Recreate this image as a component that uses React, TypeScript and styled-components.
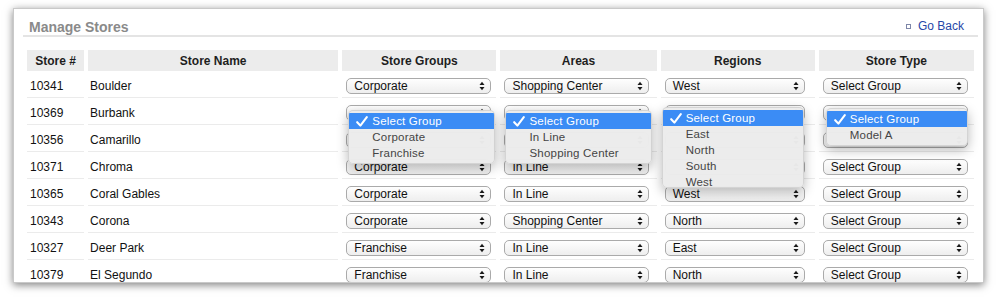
import styled, { createGlobalStyle } from 'styled-components';

const GlobalStyle = createGlobalStyle`
  body {
    margin: 0;
    background: #fff;
    font-family: "Liberation Sans", Arial, sans-serif;
  }
`;

type Menu = { options: string[]; left: number; top: number; width: number; maxH?: number };

type Row = {
  id: string;
  name: string;
  group: string;
  area: string;
  region: string;
  type: string;
};

// values that sit under the open menus are not readable in the shot, so they stay blank
const rows: Row[] = [
  { id: '10341', name: 'Boulder', group: 'Corporate', area: 'Shopping Center', region: 'West', type: 'Select Group' },
  { id: '10369', name: 'Burbank', group: '', area: '', region: '', type: '' },
  { id: '10356', name: 'Camarillo', group: '', area: '', region: '', type: '' },
  { id: '10371', name: 'Chroma', group: 'Corporate', area: 'In Line', region: '', type: 'Select Group' },
  { id: '10365', name: 'Coral Gables', group: 'Corporate', area: 'In Line', region: 'West', type: 'Select Group' },
  { id: '10343', name: 'Corona', group: 'Corporate', area: 'Shopping Center', region: 'North', type: 'Select Group' },
  { id: '10327', name: 'Deer Park', group: 'Franchise', area: 'In Line', region: 'East', type: 'Select Group' },
  { id: '10379', name: 'El Segundo', group: 'Franchise', area: 'In Line', region: 'North', type: 'Select Group' },
];

// the four pop-up menus that are open on the Burbank row
const openMenus: Menu[] = [
  { options: ['Select Group', 'Corporate', 'Franchise'], left: 6, top: 10, width: 147 },
  { options: ['Select Group', 'In Line', 'Shopping Center'], left: 5, top: 10, width: 147 },
  { options: ['Select Group', 'East', 'North', 'South', 'West'], left: 1, top: 7, width: 142, maxH: 81 },
  { options: ['Select Group', 'Model A'], left: 7, top: 8, width: 142 },
];

function Arrows() {
  return (
    <svg width="6" height="10" viewBox="0 0 6 10">
      <path d="M0.5 4 L3 0.8 L5.5 4 Z" fill="#1a1a1a" />
      <path d="M0.5 6 L3 9.2 L5.5 6 Z" fill="#1a1a1a" />
    </svg>
  );
}

function CheckMark() {
  return (
    <svg width="12" height="11" viewBox="0 0 12 11">
      <path d="M1.2 6.2 L4.4 9.6 L10.8 1.2" fill="none" stroke="#fff" strokeWidth="2.1" strokeLinecap="round" strokeLinejoin="round" />
    </svg>
  );
}

function Select({ value, width, menu }: { value: string; width: number; menu?: Menu }) {
  return (
    <SelectCell>
      <SelectBox $w={width}>
        <span>{value}</span>
        <Arrows />
      </SelectBox>
      {menu && (
        <PopMenu $left={menu.left} $top={menu.top} $w={menu.width} $maxH={menu.maxH}>
          {menu.options.map((o, i) => (
            <MenuItem key={o} $active={i === 0}>
              {i === 0 && (
                <Check>
                  <CheckMark />
                </Check>
              )}
              {o}
            </MenuItem>
          ))}
        </PopMenu>
      )}
    </SelectCell>
  );
}

export default function App() {
  return (
    <>
      <GlobalStyle />
      <Page>
        <Card>
          <TitleBar>
            <Title>Manage Stores</Title>
            <GoBack href="#">
              <Bullet />
              Go Back
            </GoBack>
          </TitleBar>
          <Table>
            <colgroup>
              <col style={{ width: 57 }} />
              <col style={{ width: 250 }} />
              <col style={{ width: 154 }} />
              <col style={{ width: 156 }} />
              <col style={{ width: 154 }} />
              <col style={{ width: 155 }} />
            </colgroup>
            <thead>
              <tr>
                <Th>Store #</Th>
                <Th>Store Name</Th>
                <Th>Store Groups</Th>
                <Th>Areas</Th>
                <Th>Regions</Th>
                <Th>Store Type</Th>
              </tr>
            </thead>
            <tbody>
              {rows.map((r, i) => {
                const open = i === 1;
                return (
                  <tr key={r.id}>
                    <Td>
                      <TextCell $pad={3}>{r.id}</TextCell>
                    </Td>
                    <Td>
                      <TextCell $pad={2}>{r.name}</TextCell>
                    </Td>
                    <Td>
                      <Select value={r.group} width={145} menu={open ? openMenus[0] : undefined} />
                    </Td>
                    <Td>
                      <Select value={r.area} width={145} menu={open ? openMenus[1] : undefined} />
                    </Td>
                    <Td>
                      <Select value={r.region} width={140} menu={open ? openMenus[2] : undefined} />
                    </Td>
                    <Td>
                      <Select value={r.type} width={145} menu={open ? openMenus[3] : undefined} />
                    </Td>
                  </tr>
                );
              })}
            </tbody>
          </Table>
        </Card>
      </Page>
    </>
  );
}

const Page = styled.div`
  box-sizing: border-box;
  height: 301px;
  padding: 8px 0 0 13px;
`;

const Card = styled.div`
  box-sizing: border-box;
  width: 971px;
  height: 275px;
  padding: 0 5px 0 9px;
  border: 1px solid #c9c9c9;
  background: #fff;
  box-shadow: 0 2px 8px rgba(0, 0, 0, 0.5);
  overflow: hidden;
`;

const TitleBar = styled.div`
  display: flex;
  justify-content: space-between;
  align-items: flex-end;
  height: 26px;
  border-bottom: 2px solid #e4e4e4;
`;

const Title = styled.h1`
  margin: 0 0 0 6px;
  font-size: 14px;
  line-height: 16px;
  font-weight: bold;
  color: #8a8a8a;
`;

const GoBack = styled.a`
  display: flex;
  align-items: center;
  gap: 7px;
  margin: 0 14px 2px 0;
  font-size: 12px;
  line-height: 14px;
  color: #2647a8;
  text-decoration: none;
`;

const Bullet = styled.span`
  width: 3px;
  height: 3px;
  border: 1px solid #7d86a8;
`;

const Table = styled.table`
  width: 100%;
  margin-top: 11px;
  table-layout: fixed;
  border-collapse: separate;
  border-spacing: 4px 2px;
  font-size: 12px;
  color: #111;
`;

const Th = styled.th`
  height: 21px;
  padding: 0;
  background: #ececec;
  font-weight: bold;
  font-size: 12px;
  color: #1e1e1e;
  text-align: center;
`;

const Td = styled.td`
  padding: 0;
  border-bottom: 1px solid #ebebeb;
`;

const TextCell = styled.div<{ $pad: number }>`
  display: flex;
  align-items: center;
  height: 24px;
  padding: 1px 0 0 ${(p) => p.$pad}px;
  box-sizing: border-box;
  white-space: nowrap;
`;

const SelectCell = styled.div`
  position: relative;
  display: flex;
  align-items: center;
  height: 24px;
  padding: 1px 0 0 4px;
  box-sizing: border-box;
`;

const SelectBox = styled.div<{ $w: number }>`
  box-sizing: border-box;
  display: flex;
  align-items: center;
  justify-content: space-between;
  width: ${(p) => p.$w}px;
  height: 16px;
  padding: 0 5px 0 7px;
  border: 1px solid #aaa;
  border-radius: 5px;
  background: linear-gradient(#fefefe, #eeeeee);
  font-size: 12px;
  line-height: 14px;
  color: #111;
  white-space: nowrap;
`;

const PopMenu = styled.div<{ $left: number; $top: number; $w: number; $maxH?: number }>`
  position: absolute;
  z-index: 2;
  left: ${(p) => p.$left}px;
  top: ${(p) => p.$top}px;
  width: ${(p) => p.$w}px;
  ${(p) => (p.$maxH ? `height: ${p.$maxH}px;` : '')}
  box-sizing: border-box;
  padding: 2px 0;
  border-radius: 5px;
  background: rgba(236, 236, 236, 0.98);
  border: 1px solid rgba(0, 0, 0, 0.1);
  box-shadow: 0 4px 12px rgba(0, 0, 0, 0.28);
  overflow: hidden;
`;

const MenuItem = styled.div<{ $active: boolean }>`
  position: relative;
  height: 16px;
  padding-left: 23px;
  font-family: "Liberation Sans", Arial, sans-serif;
  font-size: 11.5px;
  letter-spacing: 0.2px;
  line-height: 16px;
  color: ${(p) => (p.$active ? '#fff' : '#444')};
  background: ${(p) => (p.$active ? '#3b8cf5' : 'transparent')};
  white-space: nowrap;
`;

const Check = styled.span`
  position: absolute;
  left: 7px;
  top: 3px;
  display: flex;
`;
